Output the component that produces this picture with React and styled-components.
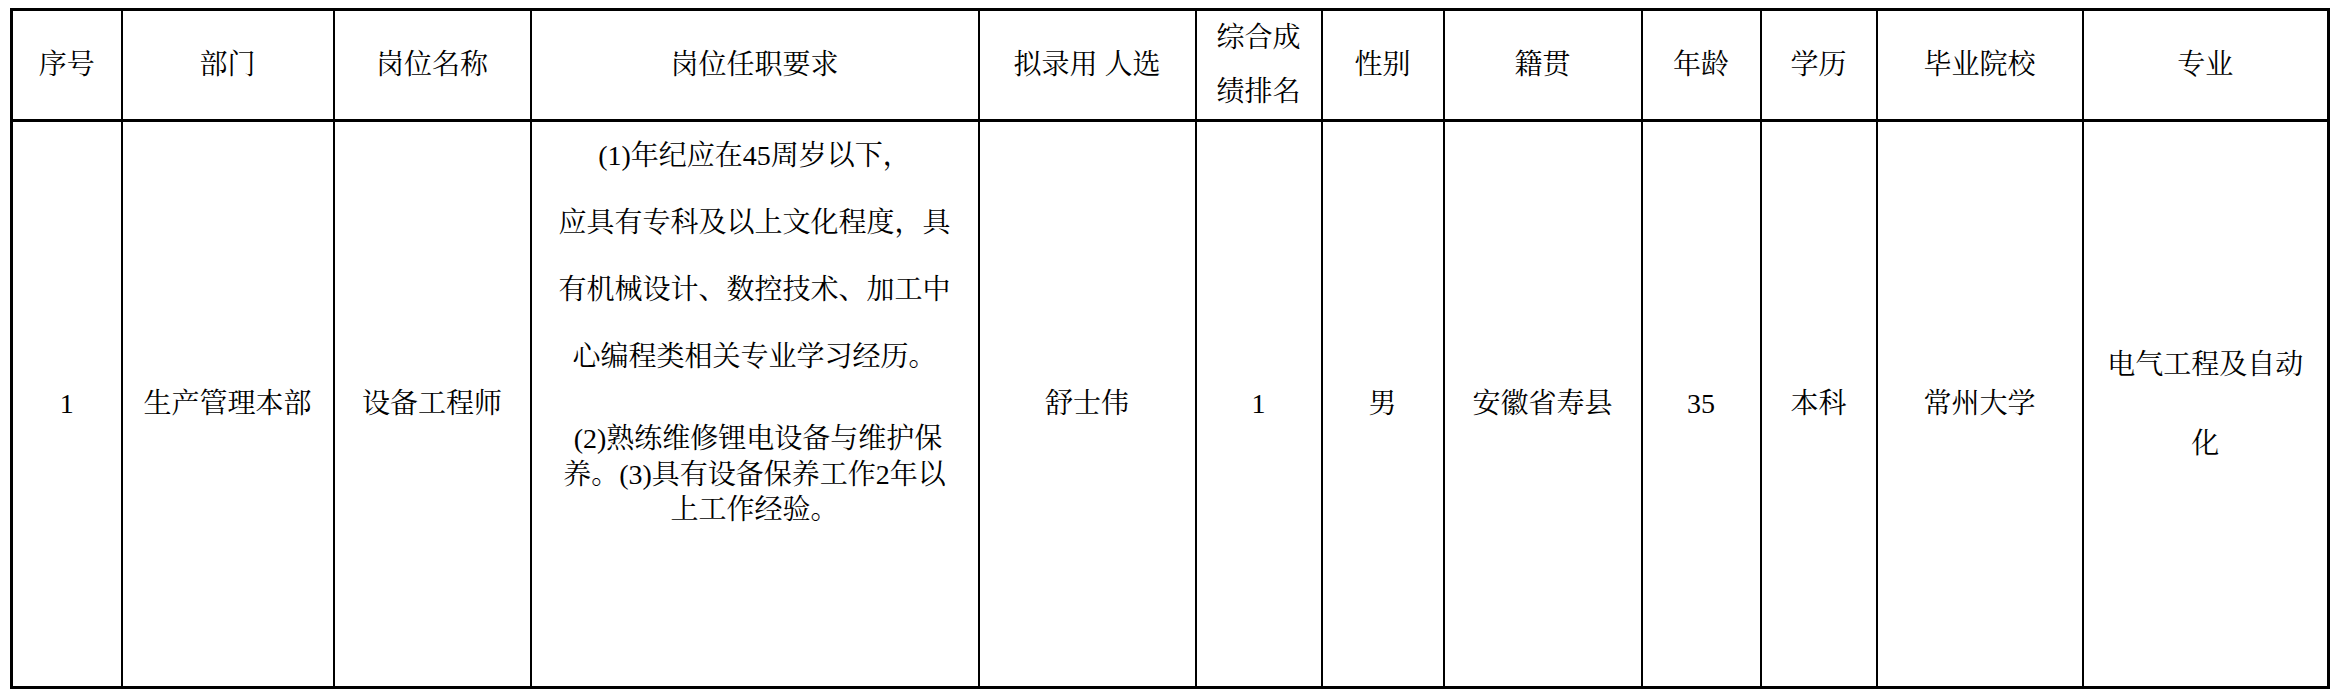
import React from "react";
import styled, { createGlobalStyle } from "styled-components";

const GlobalStyle = createGlobalStyle`
  html, body {
    margin: 0;
    padding: 0;
    background: #ffffff;
  }
  body {
    font-family: "Liberation Serif", "Noto Serif CJK SC", "Noto Sans CJK SC", serif;
    color: #000;
  }
`;

const Page = styled.div`
  padding: 8px 0 0 10px;
`;

const Table = styled.table`
  border-collapse: collapse;
  table-layout: fixed;
  width: 2319px;
  border: 3px solid #000;
  font-size: 28px;
  color: #000;
`;

const HeadCell = styled.th`
  border: 2px solid #000;
  border-bottom-width: 3px;
  height: 108px;
  padding: 0 6px;
  font-weight: 400;
  text-align: center;
  vertical-align: middle;
  line-height: ${(p) => p.$lh || 32}px;
`;

const BodyCell = styled.td`
  border: 2px solid #000;
  height: 564px;
  padding: 0 ${(p) => p.$pad ?? 6}px;
  text-align: center;
  vertical-align: ${(p) => p.$valign || "middle"};
  line-height: ${(p) => p.$lh || 32}px;
`;

const Para = styled.div`
  margin-top: ${(p) => p.$gap || 0}px;
  line-height: ${(p) => p.$lh}px;
`;

const Line = styled.span`
  display: block;
  white-space: nowrap;
  text-align: center;
`;

const widths = [110, 212, 197, 448, 217, 126, 122, 198, 119, 116, 206, 246];

const heads = [
  "序号",
  "部门",
  "岗位名称",
  "岗位任职要求",
  "拟录用 人选",
  null,
  "性别",
  "籍贯",
  "年龄",
  "学历",
  "毕业院校",
  "专业",
];

export default function App() {
  return (
    <>
      <GlobalStyle />
      <Page>
        <Table>
          <colgroup>
            {widths.map((w, i) => (
              <col key={i} style={{ width: w }} />
            ))}
          </colgroup>
          <thead>
            <tr>
              {heads.map((h, i) =>
                h === null ? (
                  <HeadCell key={i} $lh={54}>
                    <Line>综合成</Line>
                    <Line>绩排名</Line>
                  </HeadCell>
                ) : (
                  <HeadCell key={i} style={{ whiteSpace: "pre" }}>
                    {h}
                  </HeadCell>
                )
              )}
            </tr>
          </thead>
          <tbody>
            <tr>
              <BodyCell>1</BodyCell>
              <BodyCell>生产管理本部</BodyCell>
              <BodyCell>设备工程师</BodyCell>
              <BodyCell $valign="top" $pad={20}>
                <Para $lh={67}>
                  <Line>(1)年纪应在45周岁以下，</Line>
                  <Line>应具有专科及以上文化程度，具</Line>
                  <Line>有机械设计、数控技术、加工中</Line>
                  <Line>心编程类相关专业学习经历。</Line>
                </Para>
                <Para $lh={35.5} $gap={31}>
                  <Line>&nbsp;(2)熟练维修锂电设备与维护保</Line>
                  <Line>养。(3)具有设备保养工作2年以</Line>
                  <Line>上工作经验。</Line>
                </Para>
              </BodyCell>
              <BodyCell>舒士伟</BodyCell>
              <BodyCell>1</BodyCell>
              <BodyCell>男</BodyCell>
              <BodyCell>安徽省寿县</BodyCell>
              <BodyCell>35</BodyCell>
              <BodyCell>本科</BodyCell>
              <BodyCell>常州大学</BodyCell>
              <BodyCell $lh={79} $pad={20}>
                <Line>电气工程及自动</Line>
                <Line>化</Line>
              </BodyCell>
            </tr>
          </tbody>
        </Table>
      </Page>
    </>
  );
}
